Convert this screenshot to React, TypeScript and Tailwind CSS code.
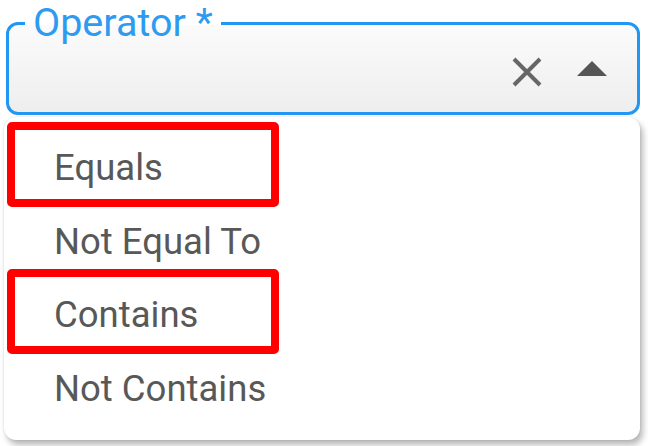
import React from 'react';

const options = ['Equals', 'Not Equal To', 'Contains', 'Not Contains'];
// rows that were marked in red
const marked = [0, 2];

export default function App() {
  return (
    <div className="w-[648px] h-[446px] bg-white overflow-hidden font-['Roboto',sans-serif]">
      {/* Field */}
      <fieldset className="ml-[6px] mt-[6px] w-[634px] h-[109px] border-[3px] border-[#2196f3] rounded-[12px] bg-gradient-to-b from-[#fbfbfb] to-[#eeeeee] px-[16px]">
        <legend className="ml-0 px-[8px] text-[39.5px] leading-[34px] text-[#2f9bf0]">Operator *</legend>
        <div className="flex items-center justify-end gap-[34px] pr-[14px] mt-[16px]">
          <svg width="32" height="32" viewBox="0 0 32 32">
            <path d="M3 3 L29 29 M29 3 L3 29" stroke="#666" strokeWidth="4" fill="none" />
          </svg>
          <svg width="30" height="16" viewBox="0 0 30 16" className="mb-[6px]">
            <path d="M0 15 L15 0 L30 15 Z" fill="#555" />
          </svg>
        </div>
      </fieldset>

      {/* Dropdown */}
      <div className="relative ml-[4px] mt-[2px] w-[636px] h-[323px] bg-white rounded-[12px] shadow-[3px_5px_6px_rgba(0,0,0,0.28),0_0_2px_rgba(0,0,0,0.15)] pt-[15px]">
        {options.map((o, i) => (
          <div key={o} className="relative h-[73.5px] flex items-center pl-[50px] text-[36.5px] text-[#585858]">
            {marked.includes(i) && (
              <div className="absolute left-[3px] top-[-10px] w-[272px] h-[85px] border-[8px] border-[#ff0000] rounded-[5px]" />
            )}
            <span className="relative">{o}</span>
          </div>
        ))}
      </div>
    </div>
  );
}
